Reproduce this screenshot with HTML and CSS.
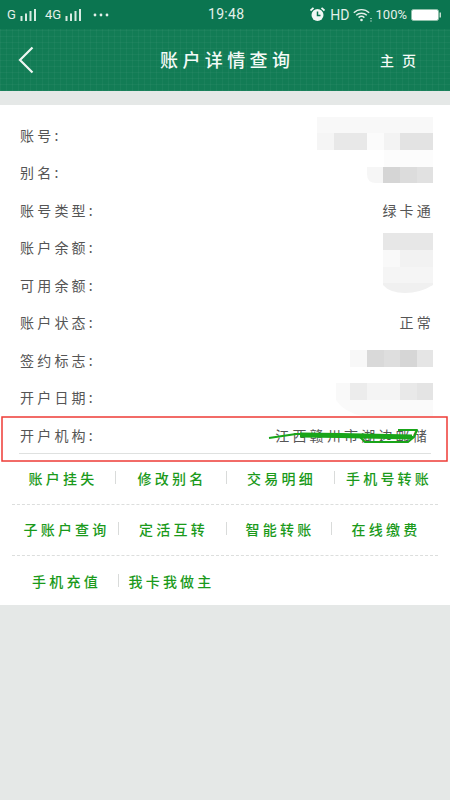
FILE: index.html
```html
<!DOCTYPE html>
<html lang="zh">
<head>
<meta charset="utf-8">
<title>账户详情查询</title>
<link rel="stylesheet" href="styles.css">
</head>
<body>
<div class="page">
  <div class="status">
    <div class="status-left">
      <span class="st-g">G</span>
      <svg class="bars" width="17" height="12" viewBox="0 0 17 12"><path d="M1.5 12V7M6 12V4.5M10.500 12V2M15 12V0" stroke="#d8ebe2" stroke-width="2"/></svg>
      <span class="st-4g">4G</span>
      <svg class="bars" width="17" height="12" viewBox="0 0 17 12"><path d="M1.5 12V7M6 12V4.5M10.500 12V2M15 12V0" stroke="#d8ebe2" stroke-width="2"/></svg>
      <svg class="dots" width="16" height="4" viewBox="0 0 16 4"><circle cx="2" cy="2" r="1.400" fill="#e4f0ea"/><circle cx="8" cy="2" r="1.400" fill="#e4f0ea"/><circle cx="14" cy="2" r="1.400" fill="#e4f0ea"/></svg>
    </div>
    <span class="time">19:48</span>
    <div class="status-right">
      <svg width="15" height="15" viewBox="0 0 15 15"><circle cx="7.500" cy="8" r="6" fill="#f2f8f5"/><path d="M7.500 4.500V8.500H10.500" stroke="#0b7550" stroke-width="1.500" fill="none"/><path d="M0.500 3.500L3.500 0.800M14.500 3.500L11.500 0.800" stroke="#f2f8f5" stroke-width="1.800"/></svg>
      <span class="st-hd">HD</span>
      <svg width="19" height="14" viewBox="0 0 19 14"><path d="M0.800 4.800C5 0.600 12 0.600 16.200 4.800M3.200 7.200C6 4.600 11 4.600 13.800 7.200M5.600 9.600C7.200 8.200 9.800 8.200 11.400 9.600" stroke="#e4f0ea" stroke-width="1.400" fill="none"/><circle cx="8.500" cy="12" r="1.300" fill="#e4f0ea"/><path d="M18 10v1M18 12.500v1" stroke="#e4f0ea" stroke-width="1.200"/></svg>
      <span class="st-pct">100%</span>
      <svg width="31" height="12" viewBox="0 0 31 12"><rect x="0.500" y="0.500" width="27" height="11" rx="2" fill="#fff" stroke="#8fc0aa"/><rect x="28.500" y="3.500" width="1.500" height="5" fill="#c4dcd0"/></svg>
    </div>
  </div>

  <header class="topbar">
    <svg class="back" width="16" height="28" viewBox="0 0 16 28"><path d="M14.500 1.500L2 14L14.500 26.500" stroke="#eef6f2" stroke-width="2.200" fill="none"/></svg>
    <h1 class="title">账户详情查询</h1>
    <span class="home">主页</span>
  </header>

  <div class="band"></div>

  <main class="card">
    <div class="row"><span class="label">账号:</span></div>
    <div class="row"><span class="label">别名:</span></div>
    <div class="row"><span class="label">账号类型:</span><span class="value">绿卡通</span></div>
    <div class="row"><span class="label">账户余额:</span></div>
    <div class="row"><span class="label">可用余额:</span></div>
    <div class="row"><span class="label">账户状态:</span><span class="value">正常</span></div>
    <div class="row"><span class="label">签约标志:</span></div>
    <div class="row"><span class="label">开户日期:</span></div>
    <div class="row row-last"><span class="label">开户机构:</span><span class="value">江西赣州市湖边邮储</span></div>

    <div class="actions a1">
      <a class="act">账户挂失</a><a class="act sep">修改别名</a><a class="act sep">交易明细</a><a class="act sep">手机号转账</a>
    </div>
    <div class="actions a2">
      <a class="act">子账户查询</a><a class="act sep">定活互转</a><a class="act sep">智能转账</a><a class="act sep">在线缴费</a>
    </div>
    <div class="actions a3 last">
      <a class="act">手机充值</a><a class="act sep">我卡我做主</a>
    </div>

    <svg class="marks" width="450" height="380" viewBox="0 105 450 380">
      <path d="M330 105C340 96 356 96 366 105Z" fill="#7db79f"/>
      <path d="M315 113L330 105H424L434 113V150H317Z" fill="#fff"/>
      <g fill="#f8f8f8"><rect x="317" y="117" width="116" height="16"/></g>
      <rect x="317" y="133" width="17" height="17" fill="#f5f5f5"/><rect x="334" y="133" width="33" height="17" fill="#e8e8e8"/><rect x="367" y="133" width="17" height="17" fill="#fbfbfb"/><rect x="384" y="133" width="16" height="17" fill="#f3f3f3"/><rect x="400" y="133" width="33" height="17" fill="#e3e3e3"/>
      <rect x="384" y="150" width="49" height="17" fill="#fcfcfc"/>
      <path d="M367 167H383V183H376Q367 183 367 174Z" fill="#f6f6f6"/><rect x="383" y="167" width="17" height="16" fill="#d5d5d5"/><rect x="400" y="167" width="17" height="16" fill="#dcdcdc"/><rect x="417" y="167" width="16" height="16" fill="#e1e1e1"/>

      <rect x="383" y="233" width="50" height="17" fill="#e7e7e7"/>
      <rect x="383" y="250" width="17" height="17" fill="#f9f9f9"/><rect x="400" y="250" width="33" height="17" fill="#f2f2f2"/>
      <rect x="383" y="267" width="50" height="16" fill="#f5f5f5"/>
      <path d="M383 283H433V285Q420 293 405 293Q390 293 383 285Z" fill="#f0f0f0"/>

      <rect x="350" y="350" width="17" height="17" fill="#f8f8f8"/><rect x="367" y="350" width="17" height="17" fill="#d9d9d9"/><rect x="384" y="350" width="16" height="17" fill="#dedede"/><rect x="400" y="350" width="17" height="17" fill="#d6d6d6"/><rect x="417" y="350" width="16" height="17" fill="#e5e5e5"/>
      <rect x="336" y="383" width="14" height="17" fill="#f9f9f9"/><rect x="350" y="383" width="17" height="17" fill="#ececec"/><rect x="367" y="383" width="33" height="17" fill="#f4f4f4"/><rect x="400" y="383" width="17" height="17" fill="#e9e9e9"/><rect x="417" y="383" width="16" height="17" fill="#e4e4e4"/>
      <path d="M336 400H433V416H362Q344 412 336 400Z" fill="#fafafa"/>

      <path d="M269 438L296 434L330 434L370 436L413 437M398 430H417L414 437L408 442H365L360 437" fill="none" stroke="#19a519" stroke-width="2" stroke-linejoin="round"/>
      <path d="M300 435L340 435.500L412 437" fill="none" stroke="#19a519" stroke-width="5"/>
      <rect x="2" y="417" width="445" height="44" fill="none" stroke="#ee3b36" stroke-width="1.500"/>
    </svg>
  </main>
</div>
</body>
</html>
```
FILE: styles.css
```css
* { box-sizing: border-box; }
html, body { margin: 0; padding: 0; }
body {
  width: 450px;
  height: 800px;
  overflow: hidden;
  background: #e5e8e7;
  font-family: "Noto Sans CJK SC", "Noto Sans", sans-serif;
}
.page { display: flex; flex-direction: column; height: 800px; }

.status {
  height: 29px;
  background: #0b7550;
  color: #e4f0ea;
  display: flex;
  align-items: center;
  justify-content: space-between;
  padding: 0 8px 0 7px;
  position: relative;
  font-family: Roboto, "Liberation Sans", sans-serif;
}
.status-left, .status-right { display: flex; align-items: center; }
.st-g { font-size: 13px; width: 13px; }
.st-4g { font-size: 13px; margin-left: 8px; width: 20px; }
.dots { margin-left: 11px; }
.time {
  position: absolute;
  left: 208px;
  top: 5px;
  font-size: 14px;
  line-height: 19px;
  letter-spacing: 0.3px;
}
.status-right svg { flex: none; }
.st-hd { font-size: 14px; margin: 0 3px 0 5px; }
.st-pct { font-size: 13px; margin: 0 4px 0 4px; }

.topbar {
  height: 62px;
  display: flex;
  align-items: center;
  position: relative;
  color: #f4faf7;
  padding: 0 18px;
  background-color: #127c55;
  background-image:
    repeating-linear-gradient(90deg, rgba(255,255,255,0.035) 0 1px, transparent 1px 6px),
    repeating-linear-gradient(0deg, rgba(255,255,255,0.035) 0 1px, transparent 1px 6px);
}
.title {
  margin: 0;
  position: absolute;
  left: 160px;
  top: 17px;
  font-size: 18px;
  line-height: 26px;
  font-weight: 500;
  letter-spacing: 4.4px;
  white-space: nowrap;
}
.home {
  margin-left: auto;
  margin-right: 17px;
  font-size: 14px;
  line-height: 24px;
  font-weight: 500;
  letter-spacing: 8px;
  width: 35px;
  white-space: nowrap;
}

.band { height: 14px; background: #e5e8e7; }

.card {
  position: relative;
  height: 500px;
  background: #fff;
  padding-top: 11px;
  flex: none;
}
.row {
  height: 37.5px;
  display: flex;
  align-items: center;
  justify-content: space-between;
  padding: 0 19px 0 20px;
  font-size: 14px;
  line-height: 20px;
  letter-spacing: 3.2px;
  color: #555;
}
.value { margin-right: -3px; white-space: nowrap; }
.row-last {
  height: 38px;
  margin: 0 19px;
  padding: 0 0 0 1px;
  border-bottom: 1px solid #dfe1e0;
}
.row-last .value { margin-right: 1px; }

.actions {
  display: grid;
  margin: 0 12px;
  height: 51px;
  padding-bottom: 2px;
  align-items: center;
  border-bottom: 1px dashed #dcdedd;
  font-size: 14px;
  line-height: 20px;
  font-weight: 500;
  letter-spacing: 3.2px;
  color: #1b9a1b;
  text-align: center;
}
.a1 { grid-template-columns: 103px 111px 108px 1fr; }
.a2 { grid-template-columns: 106px 108px 105px 1fr; }
.a3 { grid-template-columns: 106px 104px; }
.actions.last { border-bottom: 0; height: 52px; }
.act { position: relative; white-space: nowrap; padding-left: 3px; }
.a1 .act:first-child { padding-left: 0; padding-right: 1px; }
.a1 .act:last-child { padding-left: 6px; }
.sep::before {
  content: "";
  position: absolute;
  left: 0;
  top: 3px;
  height: 13px;
  border-left: 1px solid #d9dbda;
}

.marks {
  position: absolute;
  left: 0;
  top: 0;
  pointer-events: none;
}
```
